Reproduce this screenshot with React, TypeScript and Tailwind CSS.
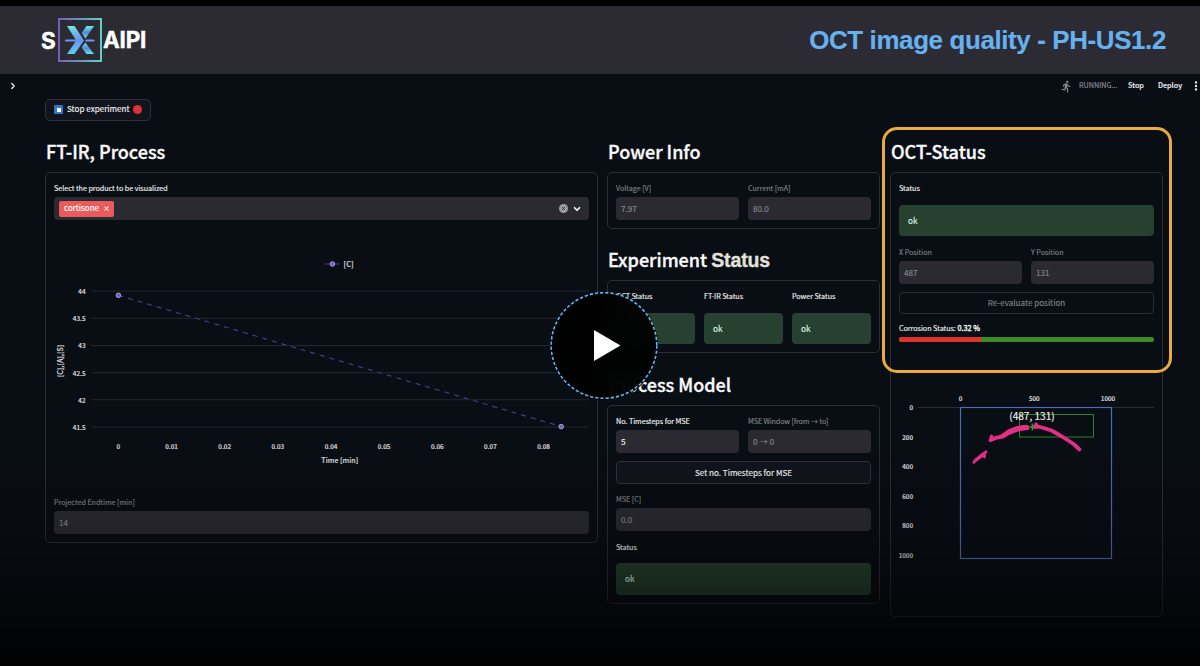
import React from "react";
import { MdDirectionsRun, MdMoreVert } from "react-icons/md";
import { ChevronDown, ChevronRight, X } from "lucide-react";

const yTicks = [
  { label: "44", y: 291 },
  { label: "43.5", y: 318.3 },
  { label: "43", y: 345.5 },
  { label: "42.5", y: 372.8 },
  { label: "42", y: 399.8 },
  { label: "41.5", y: 427 },
];

const xTicks = ["0", "0.01", "0.02", "0.03", "0.04", "0.05", "0.06", "0.07", "0.08"];

const depthTicks = ["0", "200", "400", "600", "800", "1000"];

function Heading({ children }: { children: React.ReactNode }) {
  return (
    <h2 className="h-7 mb-1.5 pl-px text-[18px] leading-[26px] font-medium whitespace-nowrap text-[#fafafa] [-webkit-text-stroke:0.35px]">
      {children}
    </h2>
  );
}

function Card({ children, className = "" }: { children: React.ReactNode; className?: string }) {
  return (
    <div className={`rounded-[5px] border border-[#2b2e35] px-2 pt-[7px] pb-2 ${className}`}>
      {children}
    </div>
  );
}

function Label({
  children,
  muted,
  className = "",
}: {
  children: React.ReactNode;
  muted?: boolean;
  className?: string;
}) {
  return (
    <p
      className={`h-4 text-[7.2px] leading-4 tracking-[-0.04px] whitespace-nowrap ${
        muted ? "text-[#7e8086]" : "text-[#eeeff1]"
      } ${className}`}
    >
      {children}
    </p>
  );
}

function Field({ value, active }: { value: string; active?: boolean }) {
  return (
    <div
      className={`mt-px h-[23px] rounded-[4px] bg-[#2b2a33] px-[5px] text-[8.2px] leading-[22px] ${
        active ? "text-[#f0f0f2]" : "text-[#85858d]"
      }`}
    >
      {value}
    </div>
  );
}

function Ok({ className = "" }: { className?: string }) {
  return (
    <div
      className={`rounded-[4px] bg-[#26412f] px-[9px] text-[8.2px] leading-[31px] text-[#dcf5e3] ${className}`}
    >
      ok
    </div>
  );
}

function Logo() {
  return (
    <div className="ml-[41px] flex items-center font-['Inter'] text-[22.5px] leading-none font-bold text-white [-webkit-text-stroke:0.4px]">
      <span className="w-[17px] pt-0.5 tracking-tight">S</span>
      <svg width="44" height="44" viewBox="0 0 44 44">
        <defs>
          <linearGradient id="frame" x1="0" x2="1">
            <stop offset="0" stopColor="#7468c8" />
            <stop offset="1" stopColor="#67e0cf" />
          </linearGradient>
          <linearGradient id="left" x1="0" y1="0" x2="0" y2="1">
            <stop offset="0" stopColor="#6fe6e4" />
            <stop offset="0.5" stopColor="#6c92f0" />
            <stop offset="1" stopColor="#5ecbed" />
          </linearGradient>
          <linearGradient id="right" x1="0" y1="0" x2="0" y2="1">
            <stop offset="0" stopColor="#68f1e2" />
            <stop offset="0.5" stopColor="#5c84d8" />
            <stop offset="1" stopColor="#62e8e9" />
          </linearGradient>
        </defs>
        <rect x="1" y="1" width="42" height="42" fill="none" stroke="url(#frame)" strokeWidth="1.8" />
        <path d="M9 8h7.500l9.500 14.500-9.500 13.500H9l8.500-12.500H8l-1.500-1 1.500-1h9.500z" fill="url(#left)" />
        <path d="M28.500 8H36l-8.500 12.500-3.800-5.500z" fill="url(#right)" />
        <path d="M28 21.500h7.500l1.500 1-1.500 1H28l-1-1z" fill="#6c9df0" />
        <path d="M27.300 24.500L36 36h-7.500l-5-6.500z" fill="url(#right)" />
      </svg>
      <span className="ml-px pt-px tracking-[-0.2px]">AIPI</span>
    </div>
  );
}

function ProcessChart() {
  return (
    <svg className="block" width="535" height="274" viewBox="54 220 535 274">
      <g stroke="#24272e" strokeWidth="1.1">
        {yTicks.map((t) => (
          <line key={t.label} x1="91" x2="589" y1={t.y} y2={t.y} />
        ))}
      </g>
      <g fill="#d5d6da" stroke="#d5d6da" strokeWidth="0.2" fontSize="6.3" fontWeight="500">
        {yTicks.map((t) => (
          <text key={t.label} x="85.5" y={t.y + 2.7} textAnchor="end">
            {t.label}
          </text>
        ))}
        {xTicks.map((t, i) => (
          <text key={t} x={118.4 + i * 53.15} y="449" textAnchor="middle">
            {t}
          </text>
        ))}
      </g>
      <line x1="118.4" y1="295.3" x2="561" y2="426.5" stroke="#483b82" strokeWidth="1.2" strokeDasharray="5 5" />
      <line x1="324.5" x2="339.5" y1="264" y2="264" stroke="#4b3b91" />
      <g fill="#6f5bc4" stroke="#b5a8ea" strokeWidth="0.9">
        <circle cx="118.4" cy="295.3" r="2.3" />
        <circle cx="561.2" cy="426.6" r="2.3" />
        <circle cx="332.4" cy="264" r="2.3" />
      </g>
      <g fill="#d5d6da" stroke="#d5d6da" strokeWidth="0.2" fontSize="7.1" fontWeight="500">
        <text x="343.5" y="266.8" fontSize="7.4">
          [C]
        </text>
        <text x="339.8" y="463.3" textAnchor="middle">
          Time [min]
        </text>
        <text transform="translate(62.5 361) rotate(-90)" textAnchor="middle">
          [C],[A],[S]
        </text>
      </g>
    </svg>
  );
}

function OctChart() {
  return (
    <svg className="block" width="255" height="266" viewBox="899 342 255 266">
      <line x1="918" x2="1154" y1="407.5" y2="407.5" stroke="#292c33" />
      <g fill="#d5d6da" stroke="#d5d6da" strokeWidth="0.2" fontSize="6.3" fontWeight="500">
        <text x="960.5" y="400.5" textAnchor="middle">0</text>
        <text x="1034.3" y="400.5" textAnchor="middle">500</text>
        <text x="1108" y="400.5" textAnchor="middle">1000</text>
        {depthTicks.map((t, i) => (
          <text key={t} x="913" y={410 + i * 29.6} textAnchor="end">
            {t}
          </text>
        ))}
      </g>
      <rect x="960.5" y="407.5" width="151" height="151" fill="none" stroke="#5069bb" strokeWidth="1.2" />
      <rect x="1019.5" y="414.5" width="74" height="22.5" fill="none" stroke="#33802a" />
      <g fill="none" stroke="#e62e86" strokeLinejoin="round" strokeLinecap="round">
        <path
          d="M973.8 462.300l2.200-3 2-1.300 3-2.600 5-3.600M979 457.500l5.500-3.500v3M976 460.500l4-3 4-3"
          strokeWidth="2.8"
        />
        <path
          d="M990 440.500l1.500-4.500 1.500 2.500 4-1.500 4.500-1 3.500-2.500 3-2.500 5-2 4-1.500 5-1 5.500 0M991 440.500l6-2.500 6-1 5-3 6-2.500 6-2 8-1"
          strokeWidth="2.8"
        />
        <path d="M1036 424.500l1 2M1034 427l4-.5 5.500 1.500 8 2.500 8 4.500 8 5 6 4 6 5.500" strokeWidth="3.8" />
      </g>
      <path d="M1032.300 423.500v7M1029.300 427h6" stroke="#2e9b2c" strokeWidth="1.5" />
      <text x="1032" y="419.7" fontSize="10.1" fill="#eeeef0" stroke="#eeeef0" strokeWidth="0.15" textAnchor="middle">
        (487, 131)
      </text>
    </svg>
  );
}

function PlayButton() {
  return (
    <button className="absolute top-[292px] left-[550px] h-[108px] w-[108px] rounded-full bg-black/90 backdrop-blur-[12px]">
      <svg width="108" height="108" viewBox="0 0 108 108">
        <circle cx="54" cy="53.5" r="52.8" fill="none" stroke="#62b5ee" strokeWidth="1.6" strokeDasharray="3.3 1.9" />
        <path d="M44 38v31l26.500-15.500z" fill="#fff" />
      </svg>
    </button>
  );
}

function App() {
  return (
    <div className="relative h-[666px] w-[1200px] overflow-hidden bg-[#090d14] pt-1.5 font-['Noto_Sans_CJK_JP','Noto_Sans',sans-serif] shadow-[inset_0_6px_0_#000] [-webkit-text-stroke:0.15px]">
      <header className="flex h-[68px] items-center justify-between bg-[#2c2b34] pr-[34px]">
        <Logo />
        <h1 className="pt-px font-['Liberation_Sans',Arial,sans-serif] text-[25.9px] font-bold tracking-[-0.36px] text-[#65b2ef]">
          OCT image quality - PH-US1.2
        </h1>
      </header>

      <div className="flex h-6 items-center justify-between pl-2 text-[7.2px] leading-none text-[#eeeff1]">
        <ChevronRight size={10} strokeWidth={3} />
        <div className="flex items-center">
          <MdDirectionsRun size={13} className="mr-1.5 text-[#8c8e94]" />
          <span className="w-[49px] text-[#8c8e94]">RUNNING...</span>
          <span className="w-[30px] font-medium">Stop</span>
          <span className="w-[31px] font-medium">Deploy</span>
          <MdMoreVert size={14} className="-mr-[3px]" />
        </div>
      </div>

      <button className="mt-px ml-[45px] flex h-[22px] w-[106px] items-center rounded-[5px] border border-[#30323a] bg-[#11141c] pb-px pl-2 text-[8.1px] leading-none whitespace-nowrap text-[#f0f0f2]">
        <span className="mr-1 flex h-[9px] w-[9px] shrink-0 items-center justify-center rounded-[1px] bg-[#3376c6]">
          <span className="h-1 w-1 bg-white" />
        </span>
        Stop experiment
        <span className="ml-[3px] h-[9px] w-[9px] shrink-0 rounded-full bg-[#d93135]" />
      </button>

      <main className="mt-[17px] ml-[45px] flex items-start">
        <section className="w-[553px]">
          <Heading>FT-IR, Process</Heading>
          <Card>
            <Label>Select the product to be visualized</Label>
            <div className="mt-px flex h-[23px] items-center rounded-[4px] bg-[#2b2a33] pr-[7px] pl-[5px]">
              <span className="flex h-4 w-[55px] items-center justify-between rounded-[2px] bg-[#ec5b5b] pr-1 pb-px pl-[5px] text-[8px] leading-none text-white">
                cortisone
                <X size={7} strokeWidth={3.5} />
              </span>
              <span className="mr-1 ml-auto flex h-[9px] w-[9px] items-center justify-center rounded-full bg-[#9b9ba3] text-[#2b2a33]">
                <X size={5} strokeWidth={4} />
              </span>
              <ChevronDown size={10} strokeWidth={4} className="text-[#fafafa]" />
            </div>
            <ProcessChart />
            <Label muted>Projected Endtime [min]</Label>
            <Field value="14" />
          </Card>
        </section>

        <section className="ml-[9px] w-[273px]">
          <Heading>Power Info</Heading>
          <Card className="grid grid-cols-2 gap-[9px]">
            <div>
              <Label muted>Voltage [V]</Label>
              <Field value="7.97" />
            </div>
            <div>
              <Label muted>Current [mA]</Label>
              <Field value="80.0" />
            </div>
          </Card>

          <div className="mt-[17px]">
            <Heading>
              Experiment{" "}
              <span className="font-['Liberation_Sans',Arial,sans-serif] text-[19.5px] font-bold tracking-[-0.15px] text-[#e4e0dc]">
                Status
              </span>
            </Heading>
            <Card className="grid grid-cols-3 gap-[9px]">
              <div>
                <Label>OCT Status</Label>
                <Ok className="mt-[9px] h-[31px]" />
              </div>
              <div>
                <Label>FT-IR Status</Label>
                <Ok className="mt-[9px] h-[31px]" />
              </div>
              <div>
                <Label>Power Status</Label>
                <Ok className="mt-[9px] h-[31px]" />
              </div>
            </Card>
          </div>

          <div className="mt-[18px]">
            <Heading>Process Model</Heading>
            <Card>
              <div className="grid grid-cols-2 gap-[9px]">
                <div>
                  <Label>No. Timesteps for MSE</Label>
                  <Field value="5" active />
                </div>
                <div>
                  <Label muted className="tracking-[-0.12px]">MSE Window [from → to]</Label>
                  <Field value="0 → 0" />
                </div>
              </div>
              <button className="mt-2 block h-[23px] w-full rounded-[4px] border border-[#30323a] bg-[#11141c] text-[8.1px] leading-5 text-[#f0f0f2]">
                Set no. Timesteps for MSE
              </button>
              <Label muted className="mt-[7px]">MSE [C]</Label>
              <Field value="0.0" />
              <Label className="mt-2">Status</Label>
              <Ok className="mt-2 h-8" />
            </Card>
          </div>
        </section>

        <section className="relative ml-2.5 w-[273px]">
          <Heading>OCT-Status</Heading>
          <Card>
            <Label>Status</Label>
            <Ok className="mt-[9px] h-[31px]" />
            <div className="mt-2 grid grid-cols-2 gap-[9px]">
              <div>
                <Label muted>X Position</Label>
                <Field value="487" />
              </div>
              <div>
                <Label muted>Y Position</Label>
                <Field value="131" />
              </div>
            </div>
            <button className="mt-2 block h-[22px] w-full rounded-[4px] border border-[#2b2e35] text-[8.1px] leading-5 text-[#7e8086]">
              Re-evaluate position
            </button>
            <Label className="mt-1.5">
              Corrosion Status: <b className="font-medium [-webkit-text-stroke:0.3px]">0.32 %</b>
            </Label>
            <div className="mt-px flex h-[5px] overflow-hidden rounded-full bg-[#3f8a2b]">
              <div className="w-[32%] bg-[#e0322b]" />
            </div>
            <OctChart />
          </Card>
          <div className="absolute -top-[11px] -left-2 h-[246px] w-[290px] rounded-[15px] border-3 border-[#eaaa3d]" />
        </section>
      </main>

      <div className="pointer-events-none absolute inset-x-0 bottom-0 h-[226px] bg-[linear-gradient(to_bottom,transparent_0%,rgba(0,0,0,0.13)_35%,rgba(0,0,0,0.36)_62%,rgba(0,0,0,0.6)_80%,rgba(0,0,0,0.92)_100%)]" />
      <PlayButton />
    </div>
  );
}

export default App;
